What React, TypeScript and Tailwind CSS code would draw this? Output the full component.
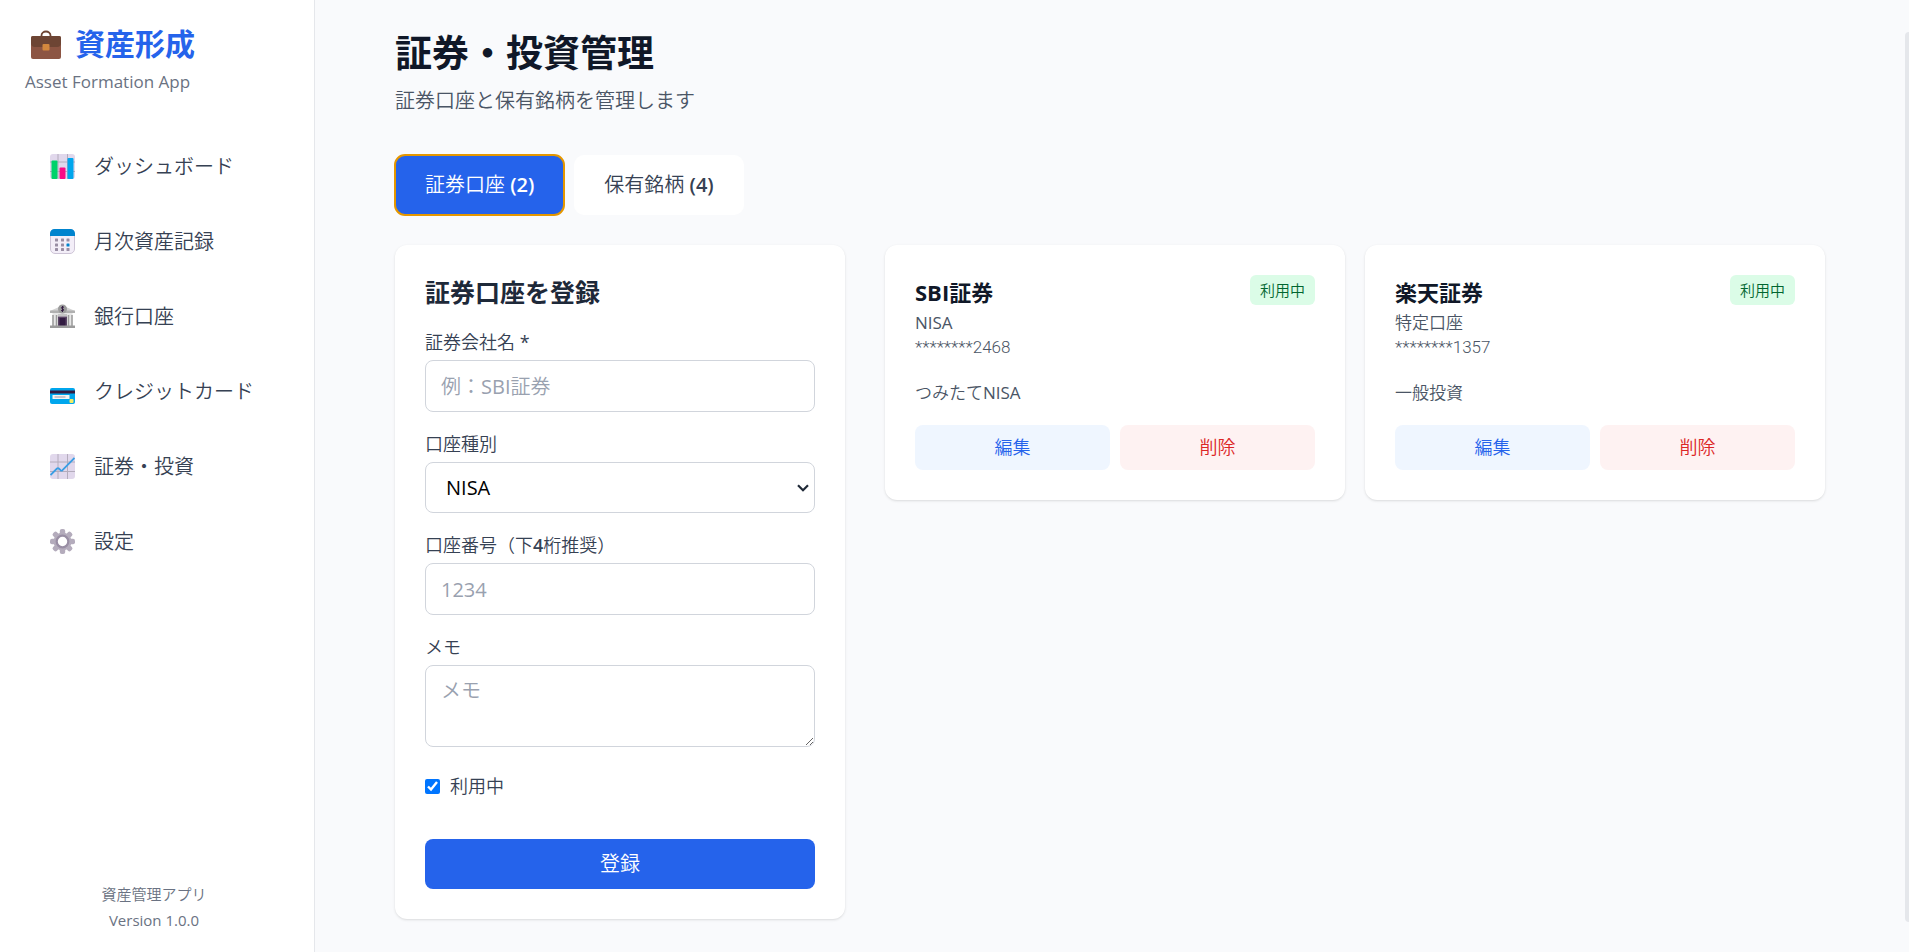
import { useState } from 'react';
import type { ReactNode } from 'react';
import { clsx } from 'clsx';

interface Account {
  id: number;
  name: string;
  type: string;
  number: string;
  memo: string;
}

const BriefcaseIcon = () => (
  <svg viewBox="0 0 32 32" className="w-8 h-8" aria-hidden="true">
    <path d="M11.5 9V7.500a4.500 4 0 0 1 9 0V9" fill="none" stroke="#6d4534" strokeWidth="1.8" />
    <rect x="1" y="8" width="30" height="23" rx="2" fill="#8c5543" />
    <path d="M1 10a2 2 0 0 1 2-2h26a2 2 0 0 1 2 2v5a4 4 0 0 1-4 4H5a4 4 0 0 1-4-4z" fill="#6d4534" />
    <rect x="12.5" y="16" width="7" height="6.5" rx="1" fill="#d3883e" />
  </svg>
);

const ChartGrid = () => (
  <>
    <rect width="25" height="25" rx="3" fill="#e1d8ec" />
    <path d="M8 0v25M17.5 0v25M0 8h25M0 17.5h25" stroke="#b4acbc" strokeWidth="1" />
  </>
);

const BarsIcon = () => (
  <svg viewBox="0 0 25 25" className="w-[25px] h-[25px]" aria-hidden="true">
    <ChartGrid />
    <rect x="1.5" y="6.5" width="6" height="18.5" rx="1" fill="#00d26a" />
    <rect x="9.5" y="13.5" width="6" height="11.5" rx="1" fill="#fc0a86" />
    <rect x="17.5" y="4" width="6" height="21" rx="1" fill="#00a6ed" />
  </svg>
);

const CalendarIcon = () => (
  <svg viewBox="0 0 25 25" className="w-[25px] h-[25px]" aria-hidden="true">
    <rect x="0.5" y="0.5" width="24" height="24" rx="4.5" fill="#f3eef8" stroke="#cdc4d6" />
    <path d="M0 7V4.5A4.5 4.5 0 0 1 4.5 0h16A4.5 4.5 0 0 1 25 4.5V7z" fill="#0084ce" />
    {[9.5, 14.5, 19].map((y) =>
      [5, 11, 16.5].map((x) => (
        <rect key={`${x}-${y}`} x={x} y={y} width="3" height="3" rx="0.5" fill={x === 16.5 && y === 14.5 ? '#0084ce' : '#998ea4'} />
      ))
    )}
  </svg>
);

const BankIcon = () => (
  <svg viewBox="0 0 25 25" className="w-[25px] h-[25px]" aria-hidden="true">
    <path d="M12.5 1.5 24 6.5V8H1V6.5z" fill="#d3d3d3" />
    <rect x="2.5" y="8" width="20" height="14" fill="#e6e6e6" />
    <rect x="0" y="6.5" width="25" height="2.5" fill="#b0b0b0" />
    <circle cx="12.5" cy="5" r="4.5" fill="#9b9b9b" />
    <path d="M14 3.3c-2.5-1.2-3.5 1-1.5 1.5s1.5 2.7-1.5 1.7M12.5 2v6" fill="none" stroke="#321b41" strokeWidth="1" />
    <path d="M3 11v11M6.5 11v11M18.5 11v11M22 11v11" stroke="#9b9b9b" strokeWidth="1.5" />
    <path d="M8 11h9" stroke="#c4c4c4" strokeWidth="2" />
    <rect x="8" y="12.5" width="9" height="9.5" fill="#5a4565" />
    <rect x="9.5" y="14" width="6" height="8" fill="#321b41" />
    <rect x="0" y="21.5" width="25" height="2.5" fill="#9b9b9b" />
  </svg>
);

const CardIcon = () => (
  <svg viewBox="0 0 25 25" className="w-[25px] h-[25px]" aria-hidden="true">
    <rect y="9" width="25" height="16" rx="2" fill="#00a6ed" />
    <rect y="11.5" width="25" height="3" fill="#321b41" />
    <rect x="2.5" y="16" width="17" height="4" fill="#f4f4f4" />
    <path d="M4.5 18h11" stroke="#8a8494" strokeWidth="0.8" />
    <rect x="19.5" y="20" width="4" height="4" rx="1" fill="#f3ec65" />
  </svg>
);

const TrendIcon = () => (
  <svg viewBox="0 0 25 25" className="w-[25px] h-[25px]" aria-hidden="true">
    <ChartGrid />
    <path d="m.5 21 6.5-6.500q1-.8 1.800 0l1.700 1.700q1 .8 2 0L24.500 4" fill="none" stroke="#3a9ee4" strokeWidth="1.8" />
  </svg>
);

const GearIcon = () => (
  <svg viewBox="0 0 25 25" className="w-[25px] h-[25px]" aria-hidden="true">
    {[0, 45, 90, 135].map((angle) => (
      <rect key={angle} x="9.8" y="0" width="5.4" height="25" rx="2" fill="#b4acbc" transform={`rotate(${angle} 12.5 12.5)`} />
    ))}
    <circle cx="12.5" cy="12.5" r="9" fill="#b4acbc" />
    <circle cx="12.5" cy="12.5" r="5.8" fill="#fff" stroke="#998ea4" strokeWidth="2.2" />
  </svg>
);

const SelectArrow = () => (
  <svg viewBox="0 0 12 8" className="absolute right-1.5 top-[22px] w-3 h-2 pointer-events-none" aria-hidden="true">
    <path d="m1 1.2 5 5 5-5" fill="none" stroke="#1f2937" strokeWidth="2.2" />
  </svg>
);

const navItems = [
  { label: 'ダッシュボード', icon: BarsIcon },
  { label: '月次資産記録', icon: CalendarIcon },
  { label: '銀行口座', icon: BankIcon },
  { label: 'クレジットカード', icon: CardIcon },
  { label: '証券・投資', icon: TrendIcon },
  { label: '設定', icon: GearIcon },
];

const accounts: Account[] = [
  { id: 1, name: 'SBI証券', type: 'NISA', number: '********2468', memo: 'つみたてNISA' },
  { id: 2, name: '楽天証券', type: '特定口座', number: '********1357', memo: '一般投資' },
];

const tabs = [
  { id: 'accounts', label: '証券口座', count: 2 },
  { id: 'holdings', label: '保有銘柄', count: 4 },
];

const headingFont = "font-['Open_Sans','Noto_Sans_CJK_JP',sans-serif] font-bold";
const inputClass = 'block w-full rounded-lg border border-gray-300 bg-white px-[15px] text-xl placeholder:text-gray-400';

const Field = ({ id, label, children }: { id: string; label: ReactNode; children: ReactNode }) => (
  <div>
    <label htmlFor={id} className="block mb-[5px] text-lg leading-[25px] text-gray-700">{label}</label>
    {children}
  </div>
);

const Sidebar = () => (
  <aside className="flex flex-col w-[315px] shrink-0 bg-white border-r border-gray-200">
    <div className="px-[25px] pt-6">
      <h1 className={clsx(headingFont, 'flex items-center gap-[13px] pl-[5px] text-3xl leading-[40px] text-[#2563eb]')}>
        <BriefcaseIcon />
        資産形成
      </h1>
      <p className="mt-[5px] text-[17px] leading-[25px] text-gray-500">Asset Formation App</p>
    </div>
    <nav className="flex flex-col gap-2.5 mt-10 px-[25px]">
      {navItems.map((item) => (
        <a key={item.label} href="#" className="flex items-center gap-[19px] px-[25px] py-[15px] text-xl leading-[35px] text-gray-700 rounded-lg">
          <item.icon />
          <span>{item.label}</span>
        </a>
      ))}
    </nav>
    <div className="mt-auto pr-1.5 pb-[19px] text-center text-[15px] leading-[26px] text-gray-500">
      <p>資産管理アプリ</p>
      <p>Version 1.0.0</p>
    </div>
  </aside>
);

const AccountForm = () => (
  <form className="bg-white rounded-xl shadow-sm p-[30px]" onSubmit={(e) => e.preventDefault()}>
    <h3 className={clsx(headingFont, 'mb-5 text-[25px] leading-[35px] text-gray-800')}>証券口座を登録</h3>
    <div className="flex flex-col gap-5">
      <Field id="company" label="証券会社名 *">
        <input id="company" type="text" placeholder="例：SBI証券" className={clsx(inputClass, 'h-[52px]')} />
      </Field>
      <Field id="type" label="口座種別">
        <div className="relative">
          <select id="type" className={clsx(inputClass, 'h-[51px] appearance-none pl-5')}>
            <option>NISA</option>
            <option>特定口座</option>
            <option>一般口座</option>
          </select>
          <SelectArrow />
        </div>
      </Field>
      <Field id="number" label={<>口座番号（下<span className="font-semibold">4</span>桁推奨）</>}>
        <input id="number" type="text" placeholder="1234" className={clsx(inputClass, 'h-[52px]')} />
      </Field>
      <Field id="memo" label="メモ">
        <textarea id="memo" rows={2} placeholder="メモ" className={clsx(inputClass, 'h-[82px] py-2.5 leading-[30px]')} />
      </Field>
    </div>
    <label className="flex items-center gap-2.5 mt-[27px] mb-10 text-lg leading-[25px] text-gray-700">
      <input type="checkbox" defaultChecked className="w-[15px] h-[15px]" />
      利用中
    </label>
    <button type="submit" className="w-full h-[50px] rounded-lg bg-[#2563eb] text-xl text-white">登録</button>
  </form>
);

const AccountCard = ({ account }: { account: Account }) => (
  <div className="bg-white rounded-xl shadow-sm p-[30px]">
    <div className="flex items-start justify-between mb-5">
      <div>
        <h3 className={clsx(headingFont, 'text-[22px] leading-[35px] text-gray-900')}>{account.name}</h3>
        <p className="text-[17px] leading-[25px] text-gray-600">{account.type}</p>
        <p className="font-[Roboto,sans-serif] font-light text-[17px] leading-[25px] text-gray-600">{account.number}</p>
      </div>
      <span className="px-2.5 py-[5px] rounded-md bg-green-100 text-[15px] leading-[20px] text-green-800">利用中</span>
    </div>
    <p className="mb-5 text-[17px] leading-[25px] text-gray-600">{account.memo}</p>
    <div className="flex gap-2.5 text-lg leading-[25px]">
      <button type="button" className="flex-1 py-2.5 rounded-lg bg-blue-50 text-[#2563eb]">編集</button>
      <button type="button" className="flex-1 py-2.5 rounded-lg bg-red-50 text-[#dc2626]">削除</button>
    </div>
  </div>
);

const App = () => {
  const [activeTab, setActiveTab] = useState('accounts');

  return (
    <div className="flex min-h-screen bg-[#f9fafc] font-['Open_Sans','Noto_Sans_CJK_JP_DemiLight','Noto_Sans_CJK_JP_Light','Noto_Sans_CJK_JP',sans-serif]">
      <Sidebar />
      <main className="flex-1 min-w-0 px-20 pt-[30px] pb-8">
        <h2 className={clsx(headingFont, 'text-[37px] leading-[45px] text-gray-900')}>証券・投資管理</h2>
        <p className="mt-[11px] mb-[39px] text-xl leading-[30px] text-gray-600">証券口座と保有銘柄を管理します</p>

        <div className="flex gap-2.5 mb-[30px]">
          {tabs.map((tab) => (
            <button
              key={tab.id}
              type="button"
              onClick={() => setActiveTab(tab.id)}
              className={clsx(
                'px-[30px] py-[15px] rounded-[10px] text-xl leading-[30px]',
                activeTab === tab.id
                  ? 'bg-[#2563eb] text-white outline-2 -outline-offset-1 outline-[#e59700]'
                  : 'bg-white text-gray-700'
              )}
            >
              {tab.label} <span className="font-semibold">({tab.count})</span>
            </button>
          ))}
        </div>

        <div className="grid grid-cols-3 gap-10 items-start">
          <AccountForm />
          <div className="col-span-2 grid grid-cols-2 gap-5">
            {accounts.map((account) => (
              <AccountCard key={account.id} account={account} />
            ))}
          </div>
        </div>
      </main>
      <div className="w-1 mt-8 mb-[30px] rounded-l bg-gray-200" />
    </div>
  );
};

export default App;
